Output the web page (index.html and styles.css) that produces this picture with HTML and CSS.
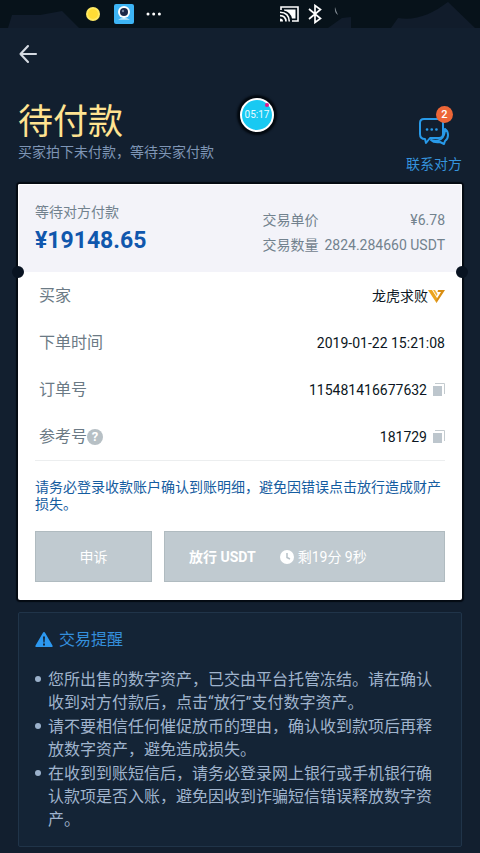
FILE: index.html
```html
<!DOCTYPE html>
<html lang="zh-CN">
<head>
<meta charset="utf-8">
<meta name="viewport" content="width=device-width, initial-scale=1">
<title>待付款</title>
<link rel="stylesheet" href="styles.css">
</head>
<body>
<div class="status-bar">
  <svg class="ridge ridge-left" width="80" height="28" viewBox="0 0 80 28" aria-hidden="true"><path d="M8 28L12 15H40L62 11L79 28Z"/></svg>
  <svg class="ridge ridge-right" width="160" height="28" viewBox="0 0 160 28" aria-hidden="true"><path d="M8 28L22 18L31 17V28ZM71 28L78 18C96 21 112 14 128 2L155 28Z"/></svg>
  <div class="status-group">
    <svg width="14" height="14" viewBox="0 0 14 14" aria-hidden="true"><circle cx="7" cy="7" r="7" fill="#ffea64"/><circle cx="7" cy="7" r="5" fill="#ffdc35"/></svg>
    <svg width="20" height="20" viewBox="0 0 20 20" aria-hidden="true"><rect width="20" height="20" rx="2" fill="#3db4f5"/><circle cx="10" cy="8" r="6" fill="#fff"/><circle cx="10" cy="8" r="4" fill="#1c2746"/><circle cx="9" cy="7" r="1.2" fill="#74809b"/><path d="M4 15.5Q10 13 16 15.5Z" fill="#fff"/></svg>
    <svg width="16" height="4" viewBox="0 0 16 4" fill="#fff" aria-hidden="true"><circle cx="2" cy="2" r="1.5"/><circle cx="7.7" cy="2" r="1.5"/><circle cx="13.4" cy="2" r="1.5"/></svg>
  </div>
  <div class="status-group status-right">
    <svg width="20" height="16" viewBox="0 0 20 16" fill="none" stroke="#fff" stroke-width="1.6" aria-hidden="true"><path d="M1 4V1H18V15H12"/><path d="M4 3.500H15.500V12.500H12Q10.500 6 4 4.500Z" fill="#fff" stroke="none"/><path d="M0 6.300Q9 6.500 9.300 15.500M0 9.600Q5.800 9.700 6 15.500"/><path d="M0 12.5Q3 12.5 3 15.5H0Z" fill="#fff" stroke="none"/></svg>
    <svg width="14" height="20" viewBox="0 0 14 20" fill="none" stroke="#fff" stroke-width="1.7" aria-hidden="true"><path d="M1 5L12.5 14.5L7 18.5V1.5L12.5 5.5L1 15"/></svg>
    <svg class="cut-icon" width="6" height="10" viewBox="0 0 6 10" aria-hidden="true"><path d="M1 0Q0 5 4 8Q2 4 1 0Z" fill="#89929a"/></svg>
  </div>
</div>

<nav class="top-nav">
  <button class="back" type="button" aria-label="返回">
    <svg width="20" height="20" viewBox="0 0 20 20" fill="none" stroke="#d5dae2" stroke-width="2.1" stroke-linecap="round" stroke-linejoin="round" aria-hidden="true"><path d="M18 10H2.500M10 2L2.500 10L10 18"/></svg>
  </button>
</nav>

<div class="timer-bubble">05:17</div>

<main class="page">
  <header class="page-head">
    <div>
      <h1>待付款</h1>
      <p class="subtitle">买家拍下未付款，等待买家付款</p>
    </div>
    <a class="contact" href="#">
      <span class="contact-icon">
        <svg width="30" height="28" viewBox="0 0 30 28" fill="none" stroke="#289ae9" stroke-width="2" stroke-linejoin="round" stroke-linecap="round" aria-hidden="true"><path d="M5 1H20Q24 1 24 5V16Q24 20 20 20H11L7 25L6 21Q1 21 1 16V5Q1 1 5 1Z"/><path d="M26 11Q29 13 29 17Q29 21 26 23L25 26L21 24Q15 25 12 22Q18 24 22 21Q26 18 26 11"/><path stroke-width="2.600" d="M8 11.500H8.100M12.700 11.500H12.800M17.400 11.500H17.500"/></svg>
        <span class="badge">2</span>
      </span>
      联系对方
    </a>
  </header>

  <section class="card">
    <div class="summary">
      <div>
        <p class="summary-label">等待对方付款</p>
        <p class="amount">¥19148.65</p>
      </div>
      <dl class="prices">
        <dt>交易单价</dt><dd>¥6.78</dd>
        <dt>交易数量</dt><dd>2824.284660 USDT</dd>
      </dl>
    </div>
    <div class="details">
      <dl class="rows">
        <div class="row"><dt>买家</dt><dd>龙虎求败<svg width="17" height="14" viewBox="0 0 17 14" aria-hidden="true"><path d="M0 1H4L9 9L8.500 14Z" fill="#eba41f"/><path d="M5 1H7L9.500 5L8.700 7Z" fill="#f2b53a"/><path d="M10 1H17L8.500 14L8 11L13 3H9.500Z" fill="#d98e12"/></svg></dd></div>
        <div class="row"><dt>下单时间</dt><dd>2019-01-22 15:21:08</dd></div>
        <div class="row"><dt>订单号</dt><dd>115481416677632<button class="copy" type="button" aria-label="复制订单号"><svg width="12" height="13" viewBox="0 0 12 13" aria-hidden="true"><path d="M2 .5H11.500V11" fill="none" stroke="#c4cbcf"/><path d="M0 3H9V13H0Z" fill="#bdc6cd"/></svg></button></dd></div>
        <div class="row"><dt>参考号<button class="help" type="button" aria-label="参考号说明">?</button></dt><dd>181729<button class="copy" type="button" aria-label="复制参考号"><svg width="12" height="13" viewBox="0 0 12 13" aria-hidden="true"><path d="M2 .5H11.500V11" fill="none" stroke="#c4cbcf"/><path d="M0 3H9V13H0Z" fill="#bdc6cd"/></svg></button></dd></div>
      </dl>
      <p class="warning">请务必登录收款账户确认到账明细，避免因错误点击放行造成财产损失。</p>
      <div class="actions">
        <button class="action" type="button">申诉</button>
        <button class="action release" type="button"><strong>放行 USDT</strong><span class="remaining"><svg width="14" height="14" viewBox="0 0 14 14" aria-hidden="true"><circle cx="7" cy="7" r="7" fill="#fff"/><path d="M7 3V7.500L10 9" fill="none" stroke="#b7c1c8" stroke-width="1.500"/></svg>剩19分 9秒</span></button>
      </div>
    </div>
  </section>

  <section class="tips">
    <h2><svg width="18" height="16" viewBox="0 0 18 16" aria-hidden="true"><path d="M9 0Q9.700 0 10.200 1L17.500 13.500Q18 15 17 15H1Q0 15 .5 13.500L7.800 1Q8.300 0 9 0Z" fill="#2c98f0"/><path d="M8 4.500H10L9.600 10.500H8.400ZM8 11.500H10V13.500H8Z" fill="#122437"/></svg>交易提醒</h2>
    <ul>
      <li>您所出售的数字资产，已交由平台托管冻结。请在确认收到对方付款后，点击“放行”支付数字资产。</li>
      <li>请不要相信任何催促放币的理由，确认收到款项后再释放数字资产，避免造成损失。</li>
      <li>在收到到账短信后，请务必登录网上银行或手机银行确认款项是否入账，避免因收到诈骗短信错误释放数字资产。</li>
    </ul>
  </section>
</main>
</body>
</html>
```
FILE: styles.css
```css
* { box-sizing: border-box; }

body {
  margin: 0;
  position: relative;
  background: #121f2f;
  color: #0b1622;
  font-family: Roboto, "Noto Sans CJK SC", sans-serif;
  font-size: 14px;
  line-height: 20px;
}

h1, h2, p, dl, dd, ul { margin: 0; padding: 0; font-weight: 400; }
button { margin: 0; padding: 0; border: 0; background: none; font: inherit; color: inherit; }
svg { display: block; flex: none; }

.status-bar {
  position: relative;
  display: flex;
  justify-content: space-between;
  height: 28px;
  padding: 0 140px 0 86px;
  background: #07121a;
}
.ridge { position: absolute; top: 0; fill: #111c2b; }
.ridge-left { left: 0; }
.ridge-right { right: 0; }
.status-group { position: relative; display: flex; align-items: center; gap: 12px; }
.status-group svg:nth-child(2) { margin-left: 2px; }
.status-right { gap: 8px; }
.status-right svg:nth-child(2) { margin-left: 0; }
.cut-icon { margin: -4px 0 0 4px; }

.top-nav { padding: 16px 18px; }
.back { display: block; }

.timer-bubble {
  position: absolute;
  top: 98px;
  left: 50%;
  width: 34px;
  height: 34px;
  border: 2px solid #fff;
  border-radius: 50%;
  background: #18c9f2;
  box-shadow: 0 0 2px 3px #030910;
  color: #e9fbff;
  font-size: 10px;
  line-height: 30px;
  text-align: center;
}
.timer-bubble::after {
  content: "";
  position: absolute;
  top: 3px;
  right: 3px;
  width: 4px;
  height: 4px;
  border-radius: 50%;
  background: #df1686;
}

.page { padding: 22px 18px 6px; }
.page-head { display: flex; justify-content: space-between; padding-bottom: 10px; }
h1 { color: #ffe391; font-size: 35px; line-height: 42px; }
.subtitle { color: #7e95b5; line-height: 16px; }
.contact {
  display: flex;
  flex-direction: column;
  align-items: center;
  gap: 8px;
  padding-top: 16px;
  color: #3593dc;
  text-decoration: none;
}
.contact-icon { position: relative; }
.badge {
  position: absolute;
  top: -12px;
  right: -4px;
  width: 17px;
  height: 17px;
  border-radius: 50%;
  background: #ed6637;
  color: #fff;
  font-size: 11px;
  font-weight: 500;
  line-height: 17px;
  text-align: center;
}

.card {
  position: relative;
  border-radius: 2px;
  background: #fff;
  box-shadow: 0 0 1px 2px #040a12;
}
.card::before, .card::after {
  content: "";
  position: absolute;
  top: 82px;
  width: 12px;
  height: 12px;
  border-radius: 50%;
  background: #081321;
}
.card::before { left: -6px; }
.card::after { right: -6px; }

.summary {
  display: flex;
  justify-content: space-between;
  height: 88px;
  padding: 17px 16px 0;
  border: solid #fff;
  border-width: 1px 1px 0;
  border-radius: 2px 2px 0 0;
  background: #f3f3f9;
  color: #72828e;
}
.amount { color: #1057ad; font-size: 23px; font-weight: 700; line-height: 38px; }
.prices {
  display: grid;
  grid-template-columns: auto auto;
  column-gap: 6px;
  align-content: start;
  padding-top: 6px;
  line-height: 25px;
}
.prices dd { text-align: right; }

.details { padding: 0 17px 18px; }
.rows { border-bottom: 1px solid #eceeef; }
.row { display: flex; justify-content: space-between; align-items: center; height: 47px; }
.row dt { display: flex; align-items: center; padding-left: 4px; color: #6b7a85; font-size: 16px; }
.row dd { display: flex; align-items: center; }
.copy { margin-left: 6px; }
.help {
  width: 16px;
  height: 16px;
  border-radius: 50%;
  background: #b7c0c5;
  color: #fff;
  font-size: 13px;
  font-weight: 700;
  line-height: 16px;
}

.warning { padding-top: 18px; color: #145ca0; line-height: 17px; }
.actions { display: grid; grid-template-columns: 117fr 281fr; gap: 12px; padding-top: 18px; }
.action {
  height: 51px;
  border: 1px solid #b0bbc0;
  background: #c0cad0;
  color: #fff;
}
.release { display: flex; align-items: center; gap: 24px; padding-left: 24px; }
.release strong { font-weight: 700; }
.remaining { display: flex; align-items: center; gap: 4px; }

.tips {
  margin-top: 12px;
  padding: 15px 16px;
  border: 1px solid #203449;
  border-radius: 2px;
  background: #142436;
  color: #a0b4cd;
  font-size: 16px;
  line-height: 23px;
}
.tips h2 { display: flex; align-items: center; gap: 6px; color: #348fdc; font-size: 16px; line-height: 24px; }
.tips ul { display: grid; gap: 1px; padding-top: 16px; list-style: none; }
.tips li { position: relative; padding-left: 13px; }
.tips li::before {
  content: "";
  position: absolute;
  top: 8px;
  left: 0;
  width: 6px;
  height: 6px;
  border-radius: 50%;
  background: #9bb1cb;
}
```
